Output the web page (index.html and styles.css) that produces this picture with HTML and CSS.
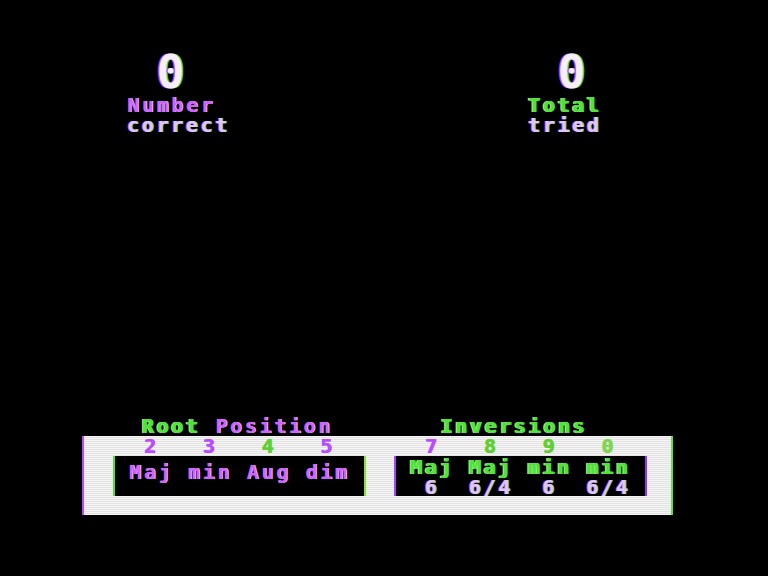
FILE: index.html
```html
<!DOCTYPE html>
<html>
<head>
<meta charset="utf-8">
<link rel="stylesheet" href="styles.css">
</head>
<body>
<div class="screen">
  <div class="scores">
    <div class="score">
      <div class="big"><span class="sp">  </span><span class="zero">0</span></div>
      <div class="txt"><span class="p">Number</span></div>
      <div class="txt"><span class="l">correct</span></div>
    </div>
    <div class="score">
      <div class="big"><span class="sp">  </span><span class="zero">0</span></div>
      <div class="txt"><span class="g">Total</span></div>
      <div class="txt"><span class="l">tried</span></div>
    </div>
  </div>

  <div class="panel">
    <div class="heads">
      <div class="txt"> <span class="g">Root</span> <span class="p">Position</span></div>
      <div class="txt head-inv">  <span class="g">Inversions</span></div>
    </div>
    <div class="box">
      <div class="txt"> <span class="p">2</span>   <span class="p">3</span>   <span class="g">4</span>   <span class="p">5</span></div>
      <div class="txt"> <span class="p">7</span>   <span class="g">8</span>   <span class="g">9</span>   <span class="lg">0</span></div>
      <div class="inner inner-left">
        <div class="txt"><span class="p">Maj min Aug dim</span></div>
      </div>
      <div class="inner inner-right">
        <div class="txt"><span class="g">Maj Maj min min</span></div>
        <div class="txt"> <span class="l">6</span>  <span class="l">6/4</span>  <span class="l">6</span>  <span class="l">6/4</span></div>
      </div>
    </div>
  </div>
</div>
</body>
</html>
```

FILE: styles.css
```css
html, body {
  margin: 0;
  padding: 0;
  background: #000;
}

body {
  width: 768px;
  height: 576px;
  overflow: hidden;
  font-family: "DejaVu Sans Mono", "Liberation Mono", monospace;
  font-weight: bold;
}

.screen {
  padding-top: 51px;
}

.txt {
  font-size: 20px;
  line-height: 20px;
  letter-spacing: 2.65px;
  white-space: pre;
  height: 20px;
}

.scores {
  display: grid;
  grid-template-columns: 401px auto;
  padding-left: 127px;
}

.big {
  height: 44px;
  line-height: 42px;
  white-space: pre;
}

.big .sp {
  font-size: 20px;
  letter-spacing: 2.65px;
}

.zero {
  font-size: 46.6px;
  letter-spacing: 1.4px;
  color: #f4eeff;
  text-shadow: -1.5px 0 #b840ff, 1.5px 0 #40d840;
}

.p {
  color: #cf62ff;
  text-shadow: 1px 0 #e6b8ff;
}

.l {
  color: #e2c4ff;
  text-shadow: -1px 0 #b44cff, 1px 0 #5ad84a;
}

.g {
  color: #4ee23a;
  text-shadow: -1px 0 #a8f090, 1px 0 #4ee23a;
}

.lg {
  color: #9cec7a;
  text-shadow: -1px 0 #4ee23a;
}

.panel {
  margin-top: 281px;
  margin-left: 82px;
  width: 591px;
}

.heads {
  display: grid;
  grid-template-columns: 253px 253px;
  column-gap: 28px;
  padding: 0 28px 0 29px;
}

.heads .txt,
.box > .txt {
  padding-left: 16px;
}

.heads .head-inv {
  padding-left: 19px;
}

.box {
  display: grid;
  grid-template-columns: 253px 253px;
  column-gap: 28px;
  padding: 0 28px 19px 29px;
  box-sizing: border-box;
  width: 591px;
  border-left: 2px solid #b848ff;
  border-right: 2px solid #5ee040;
  background: repeating-linear-gradient(to bottom, #f6f6f6 0, #f6f6f6 1px, #e2e2e2 1px, #e2e2e2 2px);
}

.box > .txt .p { text-shadow: 1px 0 #b84cff; color: #b84cff; }
.box > .txt .g { text-shadow: 1px 0 #5ed030; color: #5ed030; }
.box > .txt .lg { text-shadow: 1px 0 #7ed650; color: #7ed650; }

.inner {
  height: 40px;
  box-sizing: border-box;
  background: #000;
  padding-left: 14px;
}

.inner-left {
  padding-top: 6px;
  border-left: 2px solid #52e03a;
  border-right: 2px solid #86e040;
}

.inner-right {
  padding-top: 1px;
  border-left: 2px solid #b040ff;
  border-right: 2px solid #a030f0;
}
```
